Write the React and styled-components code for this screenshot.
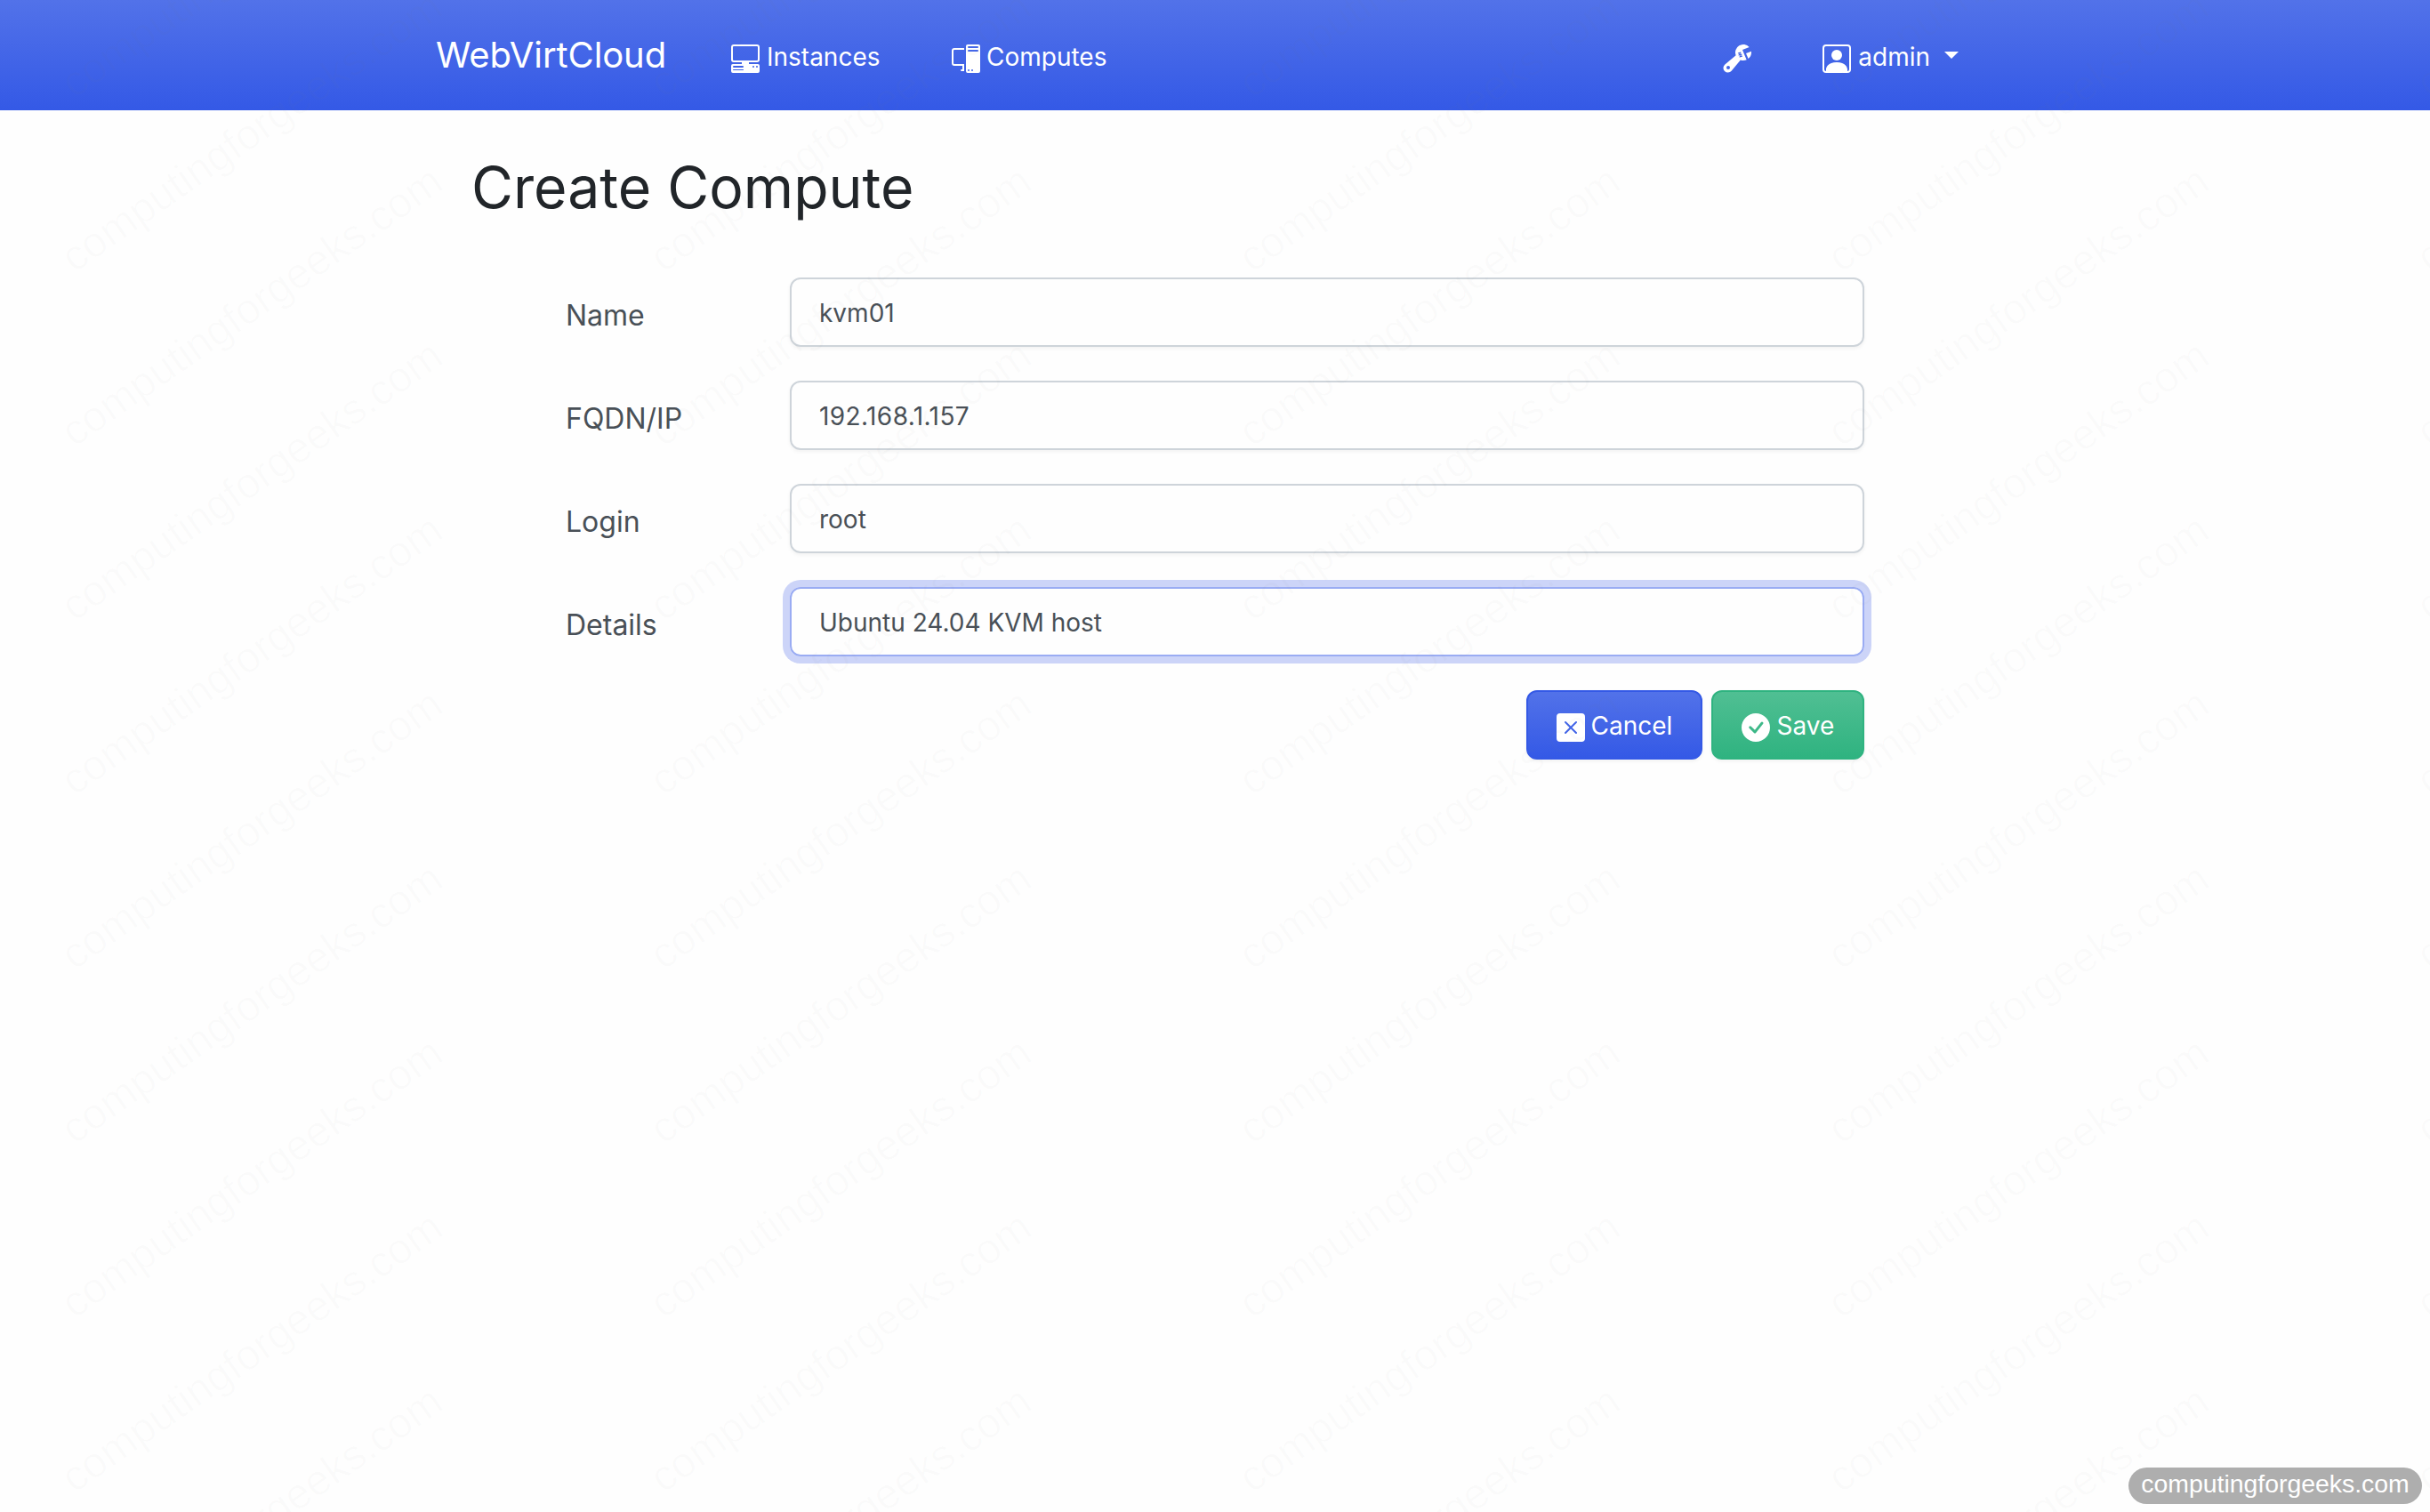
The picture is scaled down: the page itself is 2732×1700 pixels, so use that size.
import React from "react";
import styled, { createGlobalStyle } from "styled-components";
import {
  BsCheckCircleFill,
  BsPcDisplay,
  BsPcDisplayHorizontal,
  BsPersonSquare,
  BsWrenchAdjustable,
  BsXSquareFill
} from "react-icons/bs";

const GlobalStyle = createGlobalStyle`
  * {
    box-sizing: border-box;
  }

  body {
    margin: 0;
    background: #fefefe;
    color: #212529;
    font-family: Inter, "Liberation Sans", sans-serif;
    font-size: 28px;
    line-height: 42px;
  }
`;

const Page = styled.div`
  position: relative;
  height: 1700px;
  overflow: hidden;
`;

const Navbar = styled.nav`
  display: flex;
  align-items: flex-start;
  height: 124px;
  padding: 0 530px 0 490px;
  color: #fff;
  background: linear-gradient(180deg, #5272e9, #3459e6);
`;

const Brand = styled.span`
  width: 332px;
  padding-top: 38px;
  font-size: 40px;
  line-height: 48px;
  letter-spacing: -0.1px;
`;

const NavLink = styled.span`
  display: flex;
  align-items: center;
  width: ${props => props.$width || "auto"};
  height: 87px;
  padding-top: 45px;
  margin-left: ${props => (props.$right ? "auto" : "0")};
  gap: ${props => props.$gap || "8px"};
`;

const NavText = styled.span`
  margin-top: -4px;
`;

const Icon = styled.span`
  display: flex;

  svg {
    width: 32px;
    height: 32px;
  }
`;

const Caret = styled.span`
  margin: 0 0 8px 8px;
  border-top: 8px solid;
  border-left: 8px solid transparent;
  border-right: 8px solid transparent;
`;

const Container = styled.main`
  width: 1672px;
  margin: 0 auto;
`;

const Title = styled.h1`
  margin: 48px 0 62px;
  font-size: 64.3px;
  line-height: 78px;
  font-weight: 400;
`;

const Form = styled.form`
  display: flex;
  flex-direction: column;
  gap: 38px;
  padding-left: 106px;
`;

const Row = styled.div`
  display: grid;
  grid-template-columns: 252px 1208px;
`;

const Label = styled.label`
  padding-top: 19px;
  color: #495057;
  font-size: 32px;
  line-height: 48px;
`;

const Input = styled.input`
  height: 78px;
  padding: 2px 31px 0;
  border: 2px solid ${props => (props.$focused ? "#9aacf3" : "#ced4da")};
  border-radius: 12px;
  outline: none;
  color: #495057;
  background: transparent;
  font: inherit;
  letter-spacing: ${props => props.$spacing || "normal"};
  box-shadow: ${props =>
    props.$focused ? "0 0 0 8px #ccd4f8" : "0 2px 4px rgba(0, 0, 0, .05)"};
`;

const Actions = styled.div`
  display: flex;
  justify-content: flex-end;
  gap: 10px;
  width: 1460px;
`;

const Button = styled.button`
  display: flex;
  align-items: center;
  justify-content: center;
  gap: ${props => props.$gap || "8px"};
  width: ${props => props.$width};
  height: 78px;
  padding: 2px 0 0;
  border: 2px solid ${props => props.$to};
  border-radius: 12px;
  color: #fff;
  background: linear-gradient(180deg, ${props => props.$from}, ${props => props.$to});
  box-shadow: 0 2px 4px rgba(0, 0, 0, .05);
  font: inherit;

  ${Icon} {
    padding-top: 4px;
  }
`;

const Watermarks = styled.div`
  position: absolute;
  inset: 0;
  pointer-events: none;
`;

const Watermark = styled.span`
  position: absolute;
  color: rgba(128, 128, 128, .027);
  font-family: "Liberation Sans", Arial, sans-serif;
  font-size: 48px;
  line-height: 48px;
  white-space: nowrap;
  transform: rotate(-35deg);
  transform-origin: 0 100%;
`;

const SiteBadge = styled.span`
  position: absolute;
  right: 9px;
  bottom: 9px;
  width: 330px;
  height: 41px;
  border-radius: 21px;
  color: #fff;
  background: #aeaeae;
  font-family: "Liberation Sans", Arial, sans-serif;
  font-size: 28.4px;
  line-height: 37px;
  text-align: center;
`;

const SITE = "computingforgeeks.com";

const fields = [
  { name: "Name", value: "kvm01" },
  { name: "FQDN/IP", value: "192.168.1.157", spacing: "0.4px" },
  { name: "Login", value: "root" },
  { name: "Details", value: "Ubuntu 24.04 KVM host", focused: true }
];

const marks = [];
for (let y = 70; y < 1840; y += 196) {
  for (let x = 88; x < 2740; x += 662) {
    marks.push({ x, y });
  }
}

function Header() {
  return (
    <Navbar>
      <Brand>WebVirtCloud</Brand>
      <NavLink $width="248px">
        <Icon><BsPcDisplayHorizontal /></Icon>
        <NavText>Instances</NavText>
      </NavLink>
      <NavLink $gap="7px">
        <Icon><BsPcDisplay /></Icon>
        <NavText>Computes</NavText>
      </NavLink>
      <NavLink $right $width="112px">
        <Icon><BsWrenchAdjustable /></Icon>
      </NavLink>
      <NavLink>
        <Icon><BsPersonSquare /></Icon>
        <NavText>admin</NavText>
        <Caret />
      </NavLink>
    </Navbar>
  );
}

export default function App() {
  return (
    <Page>
      <GlobalStyle />
      <Header />
      <Container>
        <Title>Create Compute</Title>
        <Form>
          {fields.map(field => (
            <Row key={field.name}>
              <Label>{field.name}</Label>
              <Input
                defaultValue={field.value}
                $focused={field.focused}
                $spacing={field.spacing}
              />
            </Row>
          ))}
          <Actions>
            <Button type="button" $width="198px" $gap="7px" $from="#5272e9" $to="#3459e6">
              <Icon><BsXSquareFill /></Icon>
              Cancel
            </Button>
            <Button type="button" $width="172px" $from="#50bf93" $to="#2fb380">
              <Icon><BsCheckCircleFill /></Icon>
              Save
            </Button>
          </Actions>
        </Form>
      </Container>
      <Watermarks>
        {marks.map(({ x, y }) => (
          <Watermark key={`${x}-${y}`} style={{ left: x, top: y }}>
            {SITE}
          </Watermark>
        ))}
      </Watermarks>
      <SiteBadge>{SITE}</SiteBadge>
    </Page>
  );
}
